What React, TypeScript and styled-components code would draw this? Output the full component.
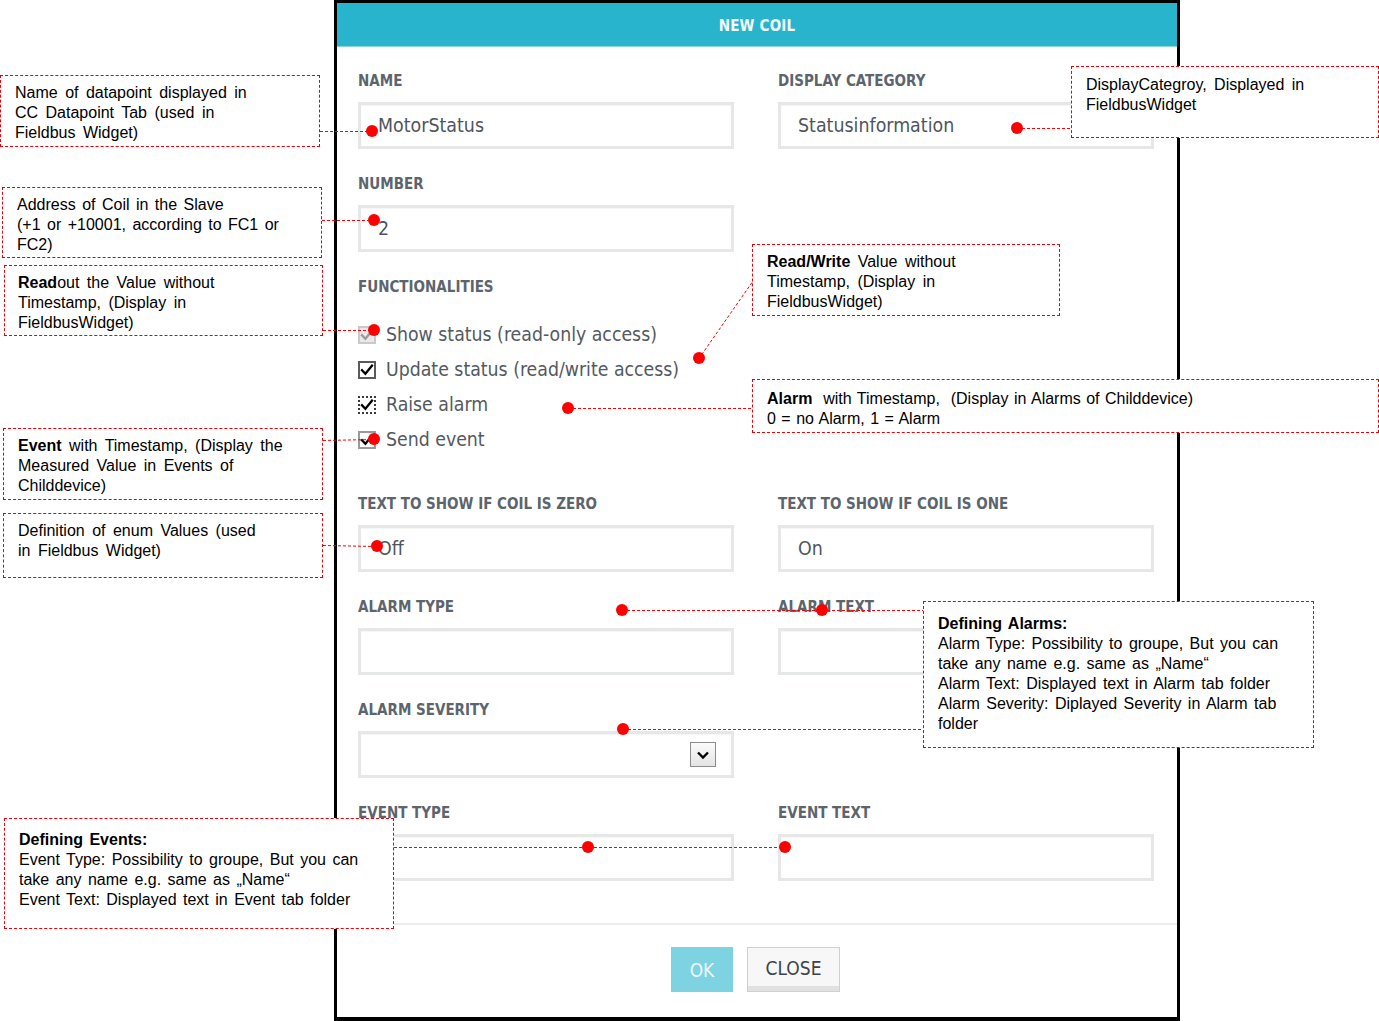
import React from "react";
import styled, { createGlobalStyle, css } from "styled-components";

const GlobalStyle = createGlobalStyle`
  html, body { margin: 0; padding: 0; background: #fff; }
  * { box-sizing: border-box; }
`;

const Page = styled.div`
  position: relative;
  width: 1379px;
  height: 1021px;
  overflow: hidden;
  padding-left: 334px;
  background: #fff;
`;

const Dialog = styled.div`
  width: 846px;
  height: 1021px;
  display: flex;
  flex-direction: column;
  border: 3px solid #000;
  border-bottom-width: 4px;
  background: #fff;
  font-family: "DejaVu Sans Condensed", "DejaVu Sans", sans-serif;
  font-stretch: condensed;
`;

const Header = styled.div`
  flex: none;
  height: 44px;
  padding-top: 3px;
  background: #29b4cd;
  border-bottom: 1px solid #8ad3e2;
  display: flex;
  align-items: center;
  justify-content: center;
  color: #f4fcfe;
  font-weight: 700;
  font-size: 15px;
  letter-spacing: 0.2px;
`;

const Body = styled.div`
  flex: 1;
  padding: 26px 23px 0 21px;
  display: grid;
  grid-template-columns: 376px 376px;
  column-gap: 44px;
  row-gap: 27px;
  align-content: start;
`;

const Field = styled.div`
  display: flex;
  flex-direction: column;
  gap: 13px;
`;

const Label = styled.div`
  height: 16px;
  line-height: 17px;
  font-size: 15px;
  font-weight: 700;
  color: #5c656d;
  white-space: nowrap;
`;

const InputBox = styled.div<{ $select?: boolean }>`
  height: 47px;
  border: 3px solid #e6e8e8;
  box-shadow: inset 0 1px 1px rgba(0, 0, 0, 0.04);
  display: flex;
  align-items: center;
  padding: 0 17px;
  font-size: 19.4px;
  color: #50555b;
  background: #fff;
  ${(p) =>
    p.$select &&
    css`
      justify-content: flex-end;
      padding-right: 15px;
    `}
`;

const ArrowButton = styled.span`
  width: 26px;
  height: 25px;
  display: inline-flex;
  align-items: center;
  justify-content: center;
  border: 1px solid #8c8c8c;
  background: linear-gradient(#fbfbfb, #e4e4e4);
`;

const Functionalities = styled.div`
  grid-column: 1 / -1;
  padding-bottom: 12px;
`;

const CheckList = styled.div`
  margin-top: 22px;
  display: flex;
  flex-direction: column;
`;

const CheckRow = styled.div`
  height: 35px;
  display: flex;
  align-items: center;
  gap: 10px;
  font-size: 19.3px;
  color: #54595f;
`;

type BoxVariant = "disabled" | "normal" | "focus" | "light";

const CheckBoxMark = styled.span<{ $variant: BoxVariant }>`
  width: 18px;
  height: 18px;
  flex: none;
  display: inline-flex;
  align-items: center;
  justify-content: center;
  border: 2px solid #5a5a5a;
  background: #fff;
  color: #000;
  ${(p) =>
    p.$variant === "disabled" &&
    css`
      border-color: #c9c9c9;
      background: #e9e9e9;
      color: #9a9a9a;
    `}
  ${(p) =>
    p.$variant === "focus" &&
    css`
      border: 2px dotted #3a3a3a;
    `}
  ${(p) =>
    p.$variant === "light" &&
    css`
      border-color: #9a9a9a;
    `}
`;

const Footer = styled.div`
  flex: none;
  height: 94px;
  border-top: 2px solid #eceeee;
  display: flex;
  justify-content: center;
  align-items: flex-start;
  padding: 22px 3px 0 0;
  gap: 14px;
`;

const Button = styled.button<{ $primary?: boolean }>`
  height: 45px;
  width: ${(p) => (p.$primary ? "62px" : "93px")};
  font-family: "DejaVu Sans Condensed", "DejaVu Sans", sans-serif;
  font-stretch: condensed;
  font-size: 19px;
  padding: 0;
  cursor: pointer;
  ${(p) =>
    p.$primary
      ? css`
          border: none;
          background: #7dd3e2;
          color: #eefafd;
        `
      : css`
          border: 1px solid #d0d0d0;
          background: #f7f7f7;
          box-shadow: inset 0 -5px 0 #e1e1e1;
          color: #3e4349;
          padding-bottom: 3px;
        `}
`;

/* ---------- annotations (overlay) ---------- */

const AnnotBox = styled.div<{ $x: number; $y: number; $w: number; $h: number; $pt: number; $pl: number; $ws: number }>`
  position: absolute;
  left: ${(p) => p.$x}px;
  top: ${(p) => p.$y}px;
  width: ${(p) => p.$w}px;
  height: ${(p) => p.$h}px;
  padding: ${(p) => p.$pt}px 4px 0 ${(p) => p.$pl}px;
  border: 1px dashed #e8000b;
  background: #fff;
  font-family: "Liberation Sans", Arial, sans-serif;
  font-size: 16px;
  line-height: 20px;
  color: #000;
  word-spacing: ${(p) => p.$ws}px;
  white-space: nowrap;
  z-index: 2;
`;

const Line = styled.div``;

const Overlay = styled.svg`
  position: absolute;
  left: 0;
  top: 0;
  width: 1379px;
  height: 1021px;
  pointer-events: none;
  z-index: 3;
`;

type Annot = {
  x: number;
  y: number;
  w: number;
  h: number;
  pt: number;
  pl: number;
  ws: number;
  lines: React.ReactNode[];
};

const annotations: Annot[] = [
  {
    x: 0, y: 75, w: 320, h: 72, pt: 7, pl: 14, ws: 3,
    lines: ["Name of datapoint displayed in", "CC Datapoint Tab (used in", "Fieldbus Widget)"],
  },
  {
    x: 2, y: 187, w: 320, h: 71, pt: 7, pl: 14, ws: 2,
    lines: ["Address of Coil in the Slave", "(+1 or +10001, according to FC1 or", "FC2)"],
  },
  {
    x: 4, y: 265, w: 319, h: 71, pt: 7, pl: 13, ws: 3,
    lines: [
      <><b>Read</b>out the Value without</>,
      "Timestamp,  (Display in",
      "FieldbusWidget)",
    ],
  },
  {
    x: 752, y: 244, w: 308, h: 72, pt: 7, pl: 14, ws: 3,
    lines: [
      <><b>Read/Write</b> Value without</>,
      "Timestamp,  (Display in",
      "FieldbusWidget)",
    ],
  },
  {
    x: 752, y: 379, w: 627, h: 54, pt: 9, pl: 14, ws: 1,
    lines: [
      <><b>Alarm</b>&nbsp; with Timestamp,&nbsp; (Display in Alarms of Childdevice)</>,
      "0 = no Alarm, 1 = Alarm",
    ],
  },
  {
    x: 3, y: 428, w: 320, h: 72, pt: 7, pl: 14, ws: 3,
    lines: [
      <><b>Event</b> with Timestamp, (Display the</>,
      "Measured Value in Events of",
      "Childdevice)",
    ],
  },
  {
    x: 3, y: 513, w: 320, h: 65, pt: 7, pl: 14, ws: 3,
    lines: ["Definition of enum Values (used", "in Fieldbus Widget)"],
  },
  {
    x: 1071, y: 66, w: 308, h: 72, pt: 8, pl: 14, ws: 3,
    lines: ["DisplayCategroy, Displayed in", "FieldbusWidget"],
  },
  {
    x: 923, y: 601, w: 391, h: 147, pt: 12, pl: 14, ws: 2,
    lines: [
      <b>Defining Alarms:</b>,
      "Alarm Type: Possibility to groupe, But you can",
      "take any name e.g. same as „Name“",
      "Alarm Text: Displayed text in Alarm tab folder",
      "Alarm Severity: Diplayed Severity in Alarm tab",
      "folder",
    ],
  },
  {
    x: 4, y: 818, w: 390, h: 111, pt: 11, pl: 14, ws: 2,
    lines: [
      <b>Defining Events:</b>,
      "Event Type: Possibility to groupe, But you can",
      "take any name e.g. same as „Name“",
      "Event Text: Displayed text in Event tab folder",
    ],
  },
];

const connectors: [number, number, number, number][] = [
  [320, 131, 372, 131],
  [322, 220, 374, 220],
  [323, 330, 374, 330],
  [752, 282, 699, 358],
  [568, 408, 752, 408],
  [323, 440, 374, 439],
  [323, 545, 377, 546],
  [1017, 128, 1071, 128],
  [622, 610, 923, 610],
  [623, 729, 923, 729],
  [394, 847, 785, 847],
];

const dots: [number, number][] = [
  [372, 131],
  [374, 220],
  [374, 330],
  [699, 358],
  [568, 408],
  [374, 439],
  [377, 546],
  [1017, 128],
  [622, 610],
  [822, 610],
  [623, 729],
  [588, 847],
  [785, 847],
];

const Check = () => (
  <svg width="14" height="14" viewBox="0 0 14 14">
    <path d="M2 7.2 L5.4 10.8 L12 2.6" fill="none" stroke="currentColor" strokeWidth="2.3" strokeLinecap="square" />
  </svg>
);

const Chevron = () => (
  <svg width="14" height="10" viewBox="0 0 14 10">
    <path d="M2 2.5 L7 7.5 L12 2.5" fill="none" stroke="#000" strokeWidth="2.4" />
  </svg>
);

const checks: { label: string; variant: BoxVariant }[] = [
  { label: "Show status (read-only access)", variant: "disabled" },
  { label: "Update status (read/write access)", variant: "normal" },
  { label: "Raise alarm", variant: "focus" },
  { label: "Send event", variant: "light" },
];

const TextField = ({ label, value }: { label: string; value?: string }) => (
  <Field>
    <Label>{label}</Label>
    <InputBox>{value}</InputBox>
  </Field>
);

export default function App() {
  return (
    <>
      <GlobalStyle />
      <Page>
        <Dialog>
          <Header>NEW COIL</Header>
          <Body>
            <TextField label="NAME" value="MotorStatus" />
            <TextField label="DISPLAY CATEGORY" value="Statusinformation" />
            <TextField label="NUMBER" value="2" />
            <div />
            <Functionalities>
              <Label>FUNCTIONALITIES</Label>
              <CheckList>
                {checks.map((c) => (
                  <CheckRow key={c.label}>
                    <CheckBoxMark $variant={c.variant}>
                      <Check />
                    </CheckBoxMark>
                    {c.label}
                  </CheckRow>
                ))}
              </CheckList>
            </Functionalities>
            <TextField label="TEXT TO SHOW IF COIL IS ZERO" value="Off" />
            <TextField label="TEXT TO SHOW IF COIL IS ONE" value="On" />
            <TextField label="ALARM TYPE" />
            <TextField label="ALARM TEXT" />
            <Field>
              <Label>ALARM SEVERITY</Label>
              <InputBox $select>
                <ArrowButton>
                  <Chevron />
                </ArrowButton>
              </InputBox>
            </Field>
            <div />
            <TextField label="EVENT TYPE" />
            <TextField label="EVENT TEXT" />
          </Body>
          <Footer>
            <Button $primary>OK</Button>
            <Button>CLOSE</Button>
          </Footer>
        </Dialog>

        {annotations.map((a, i) => (
          <AnnotBox key={i} $x={a.x} $y={a.y} $w={a.w} $h={a.h} $pt={a.pt} $pl={a.pl} $ws={a.ws}>
            {a.lines.map((l, j) => (
              <Line key={j}>{l}</Line>
            ))}
          </AnnotBox>
        ))}

        <Overlay viewBox="0 0 1379 1021">
          {connectors.map(([x1, y1, x2, y2], i) => (
            <line key={i} x1={x1} y1={y1 + 0.5} x2={x2} y2={y2 + 0.5} stroke="#ff0000" strokeWidth="1" strokeDasharray="3 2" />
          ))}
          {dots.map(([cx, cy], i) => (
            <circle key={i} cx={cx} cy={cy} r="6" fill="#ff0000" />
          ))}
        </Overlay>
      </Page>
    </>
  );
}
